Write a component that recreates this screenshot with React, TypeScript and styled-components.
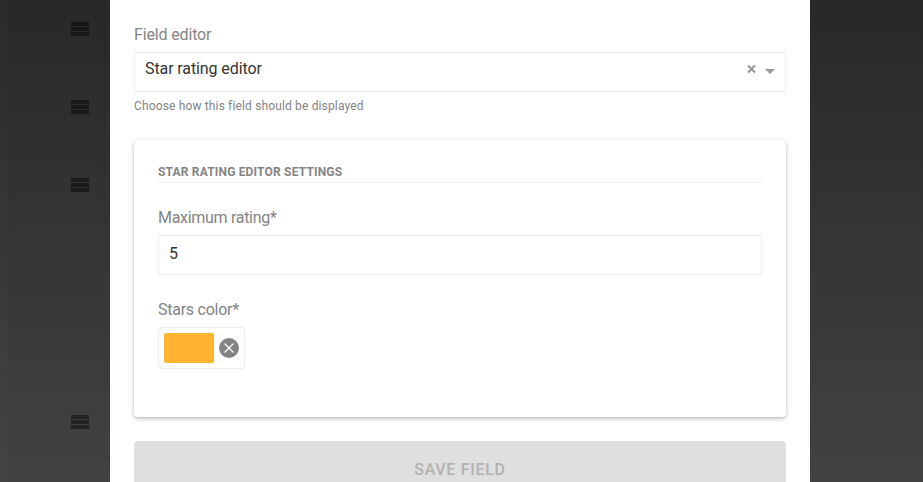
import React from 'react';
import styled, { createGlobalStyle } from 'styled-components';

const Global = createGlobalStyle`
  *, *::before, *::after { box-sizing: border-box; }
  body { margin: 0; overflow: hidden; background: #353535; font-family: Roboto, "Liberation Sans", sans-serif; }
`;

const Page = styled.div`
  display: grid;
  grid-template-columns: 110px 700px 1fr;
  height: 482px;
  overflow: hidden;
  background: linear-gradient(#282828, #424242);
`;

const Backdrop = styled.div`
  display: grid;
  grid-template-columns: 9px 1fr;
  height: 482px;
  overflow: hidden;
`;

const Sidebar = styled.div`
  display: flex;
  flex-direction: column;
  border-right: 1px solid rgba(0, 0, 0, 0.04);
  background: rgba(255, 255, 255, 0.01);
`;

const SidebarRow = styled.div<{ $height: number }>`
  flex: none;
  height: ${({ $height }) => $height}px;
  border-bottom: 1px solid rgba(0, 0, 0, 0.08);
`;

const FieldList = styled.div`
  display: flex;
  flex-direction: column;
`;

const FieldRow = styled.div<{ $gap: number }>`
  display: flex;
  flex: none;
  align-items: center;
  justify-content: space-between;
  height: 68px;
  margin-top: ${({ $gap }) => $gap}px;
  padding-left: 62px;
`;

const CardEdge = styled.div`
  width: 5px;
  height: 68px;
  border-radius: 3px 0 0 3px;
  box-shadow: 0 1px 2px rgba(0, 0, 0, 0.18);
`;

const Handle = styled.svg`
  display: block;
  width: 18px;
  height: 15px;
`;

const Dialog = styled.main`
  display: flex;
  flex-direction: column;
  height: 482px;
  padding: 24px 24px 0;
  overflow: hidden;
  background: #fff;
`;

const Label = styled.label<{ $spacing: number }>`
  display: block;
  height: 20px;
  color: #848484;
  font-size: 16px;
  line-height: 21px;
  letter-spacing: ${({ $spacing }) => $spacing}px;
`;

const Control = styled.div<{ $lineHeight: number }>`
  display: flex;
  flex: none;
  justify-content: space-between;
  height: 40px;
  margin-top: 8px;
  padding: 0 10px;
  border: 1px solid #ededed;
  color: #343434;
  font-size: 16px;
  line-height: ${({ $lineHeight }) => $lineHeight}px;
`;

const Value = styled.span`
  letter-spacing: -0.1px;
`;

const SelectIcons = styled.svg`
  display: block;
  width: 30px;
  height: 38px;
`;

const Hint = styled.p`
  flex: none;
  height: 16px;
  margin: 6px 0 0;
  color: #848484;
  font-size: 12px;
  line-height: 16px;
  letter-spacing: 0.15px;
`;

const Settings = styled.section`
  flex: none;
  height: 277px;
  margin-top: 26px;
  padding: 24px;
  border-radius: 4px;
  box-shadow: 0 2px 4px rgba(0, 0, 0, 0.22), 0 0 3px rgba(0, 0, 0, 0.09);
`;

const SettingsTitle = styled.h2`
  height: 19px;
  margin: 0 0 24px;
  border-bottom: 1px solid #ededed;
  color: #848484;
  font-size: 12px;
  font-weight: 700;
  line-height: 16px;
  letter-spacing: 0.18px;
`;

const Setting = styled.div`
  margin-bottom: 24px;
`;

const ColorPicker = styled.div`
  display: flex;
  align-items: center;
  gap: 5px;
  width: 87px;
  height: 42px;
  margin-top: 8px;
  padding: 0 5px;
  border: 1px solid #ededed;
  border-radius: 3px;
`;

const Swatch = styled.div`
  width: 50px;
  height: 30px;
  border-radius: 2px;
  background: #ffb330;
`;

const ClearIcon = styled.svg`
  display: block;
  width: 20px;
  height: 20px;
`;

const SaveButton = styled.button`
  flex: none;
  height: 58px;
  margin-top: 24px;
  padding: 0;
  border: 0;
  border-radius: 4px;
  background: #dfdfdf;
  color: #b2b2b2;
  font: 500 16px/58px Roboto, "Liberation Sans", sans-serif;
  letter-spacing: 0.7px;
`;

const sidebarRows = [17, 71, 71, 71, 71, 71, 71];
const fieldGaps = [-5, 10, 10, 169];

function DragHandle() {
  return (
    <Handle viewBox="0 0 18 15">
      <path d="M0 0h18v4H0zM0 5h18v4H0zM0 10h18v4H0z" fill="#000" fillOpacity=".45" />
    </Handle>
  );
}

export default function App() {
  return (
    <>
      <Global />
      <Page>
        <Backdrop>
          <Sidebar>
            {sidebarRows.map((height, i) => <SidebarRow key={i} $height={height} />)}
          </Sidebar>
          <FieldList>
            {fieldGaps.map((gap, i) => (
              <FieldRow key={i} $gap={gap}>
                <DragHandle />
                <CardEdge />
              </FieldRow>
            ))}
          </FieldList>
        </Backdrop>
        <Dialog>
          <Label $spacing={-0.15}>Field editor</Label>
          <Control $lineHeight={32}>
            <Value>Star rating editor</Value>
            <SelectIcons viewBox="0 0 30 38">
              <path d="M3 12.5l7 7M10 12.5l-7 7" stroke="#999" strokeWidth="2.2" fill="none" />
              <path d="M20 16h10l-5 5z" fill="#999" />
            </SelectIcons>
          </Control>
          <Hint>Choose how this field should be displayed</Hint>
          <Settings>
            <SettingsTitle>STAR RATING EDITOR SETTINGS</SettingsTitle>
            <Setting>
              <Label $spacing={-0.3}>Maximum rating*</Label>
              <Control $lineHeight={35}><Value>5</Value></Control>
            </Setting>
            <Setting>
              <Label $spacing={-0.25}>Stars color*</Label>
              <ColorPicker>
                <Swatch />
                <ClearIcon viewBox="0 0 20 20">
                  <circle cx="10" cy="10" r="10" fill="#848484" />
                  <path d="M5.5 5.5l9 9M14.5 5.5l-9 9" stroke="#fff" strokeWidth="1.2" />
                </ClearIcon>
              </ColorPicker>
            </Setting>
          </Settings>
          <SaveButton>SAVE FIELD</SaveButton>
        </Dialog>
      </Page>
    </>
  );
}
